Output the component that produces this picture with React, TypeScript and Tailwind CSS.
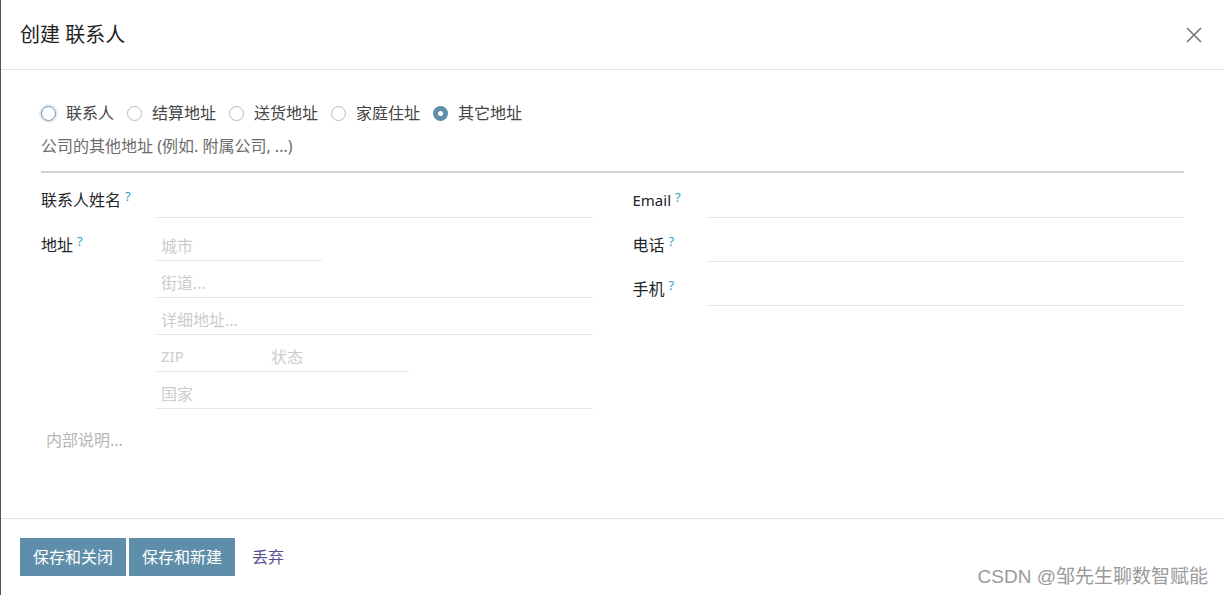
import React, { useState } from 'react';

const font = { fontFamily: '"Noto Sans", "Noto Sans CJK SC", sans-serif' };

const Help: React.FC = () => (
  <sup className="ml-[4px] text-[13px] text-[#2ca0c9] relative -top-[4px]">?</sup>
);

const addressTypes = ['联系人', '结算地址', '送货地址', '家庭住址', '其它地址'];

const App: React.FC = () => {
  const [type, setType] = useState('其它地址');

  return (
    <div
      className="relative h-[595px] w-[1224px] overflow-hidden bg-white border-l border-[#555] flex flex-col text-[16px] text-[#212529]"
      style={font}
    >
      {/* header */}
      <div className="h-[70px] shrink-0 border-b border-[#dee2e6] flex items-center justify-between pl-[19px] pr-[20px]">
        <h4 className="text-[20px] text-[#222] leading-none">创建 联系人</h4>
        <button className="w-[20px] h-[20px] flex items-center justify-center">
          <svg width="18" height="18" viewBox="0 0 18 18" fill="none" stroke="#777" strokeWidth="1.6">
            <path d="M2 2 L16 16 M16 2 L2 16" />
          </svg>
        </button>
      </div>

      {/* body */}
      <div className="flex-1 px-[40px] pt-[31px]">
        <div className="flex items-center h-[24px]">
          {addressTypes.map((t, i) => {
            const checked = type === t;
            return (
              <label key={t} className="flex items-center mr-[13px] cursor-pointer" onClick={() => setType(t)}>
                {checked ? (
                  <span className="w-[15px] h-[15px] rounded-full bg-[#5e8ea9] flex items-center justify-center">
                    <span className="w-[5px] h-[5px] rounded-full bg-white" />
                  </span>
                ) : i === 0 ? (
                  <span className="w-[15px] h-[15px] rounded-full border border-[#6b8fa6] shadow-[0_0_0_2px_#e6eef4]" />
                ) : (
                  <span className="w-[15px] h-[15px] rounded-full border border-[#b9b9b9]" />
                )}
                <span className="ml-[10px] text-[#444] leading-[24px]">{t}</span>
              </label>
            );
          })}
        </div>
        <div className="mt-[10px] text-[16px] leading-[22px] text-[#6c6c6c]">公司的其他地址 (例如. 附属公司, ...)</div>
        <div className="mt-[14px] h-[2px] bg-[#d2d2d2]" />

        <div className="mt-[7px] grid grid-cols-2 gap-x-[40px]">
          {/* left column */}
          <div>
            <div className="flex mb-[6px]">
              <div className="w-[115px] h-[38px] flex items-center shrink-0 pt-[2px]">
                联系人姓名<Help />
              </div>
              <div className="flex-1 h-[38px] border-b border-[#e8e8e8]" />
            </div>
            <div className="flex">
              <div className="w-[115px] h-[38px] flex items-center shrink-0 pt-[3px]">
                地址<Help />
              </div>
              <div className="flex-1 flex flex-col text-[#cdcdcd]">
                <div className="w-[166px] h-[37px] border-b border-[#e8e8e8] flex items-center pl-[5px] pt-[8px]">城市</div>
                <div className="h-[37px] border-b border-[#e8e8e8] flex items-center pl-[5px] pt-[7px]">街道...</div>
                <div className="h-[37px] border-b border-[#e8e8e8] flex items-center pl-[5px] pt-[7px]">详细地址...</div>
                <div className="w-[253px] h-[37px] border-b border-[#e8e8e8] flex items-center pl-[5px] pt-[7px]">
                  <span className="w-[110px] text-[15px]">ZIP</span>
                  <span>状态</span>
                </div>
                <div className="h-[37px] border-b border-[#e8e8e8] flex items-center pl-[5px] pt-[7px]">国家</div>
              </div>
            </div>
            <div className="mt-[20px] pl-[5px] leading-[22px] text-[#b5b5b5]">内部说明...</div>
          </div>

          {/* right column */}
          <div>
            {[
              ['Email', true],
              ['电话', false],
              ['手机', false],
            ].map(([l, latin]) => (
              <div key={l as string} className="flex mb-[6px]">
                <div className={`w-[73px] h-[38px] flex items-center shrink-0 pt-[3px] ${latin ? 'text-[15px]' : ''}`}>
                  {l}
                  <Help />
                </div>
                <div className="flex-1 h-[38px] border-b border-[#e8e8e8]" />
              </div>
            ))}
          </div>
        </div>
      </div>

      {/* footer */}
      <div className="shrink-0 border-t border-[#dee2e6] pt-[19px] pb-[19px] pl-[19px] flex items-center">
        <button className="h-[38px] px-[13px] bg-[#5e8ea9] text-white">保存和关闭</button>
        <button className="ml-[3px] h-[38px] px-[13px] bg-[#5e8ea9] text-white">保存和新建</button>
        <button className="ml-[17px] h-[38px] text-[#5c4f91]">丢弃</button>
      </div>

      <div
        className="absolute right-[16px] bottom-[9px] text-[19px] text-[#9a9a9a] leading-none"
        style={{ fontFamily: '"Liberation Sans", "Noto Sans CJK SC", sans-serif' }}
      >
        CSDN @邹先生聊数智赋能
      </div>
    </div>
  );
};

export default App;
